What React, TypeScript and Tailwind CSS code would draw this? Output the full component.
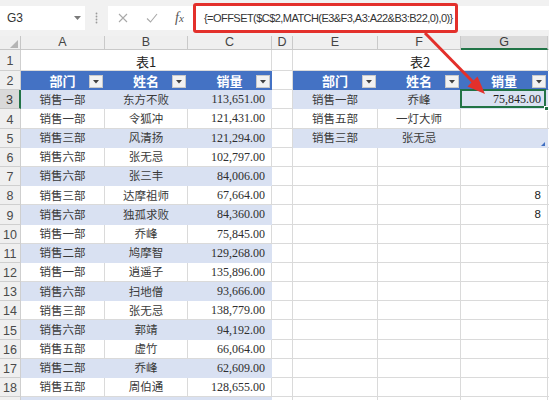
import React from 'react';

const t1: [string, string, string][] = [
  ['销售一部', '东方不败', '113,651.00'],
  ['销售一部', '令狐冲', '121,431.00'],
  ['销售三部', '风清扬', '121,294.00'],
  ['销售六部', '张无忌', '102,797.00'],
  ['销售六部', '张三丰', '84,006.00'],
  ['销售三部', '达摩祖师', '67,664.00'],
  ['销售六部', '独孤求败', '84,360.00'],
  ['销售一部', '乔峰', '75,845.00'],
  ['销售二部', '鸠摩智', '129,268.00'],
  ['销售一部', '逍遥子', '135,896.00'],
  ['销售六部', '扫地僧', '93,666.00'],
  ['销售三部', '张无忌', '138,779.00'],
  ['销售六部', '郭靖', '94,192.00'],
  ['销售五部', '虚竹', '66,064.00'],
  ['销售二部', '乔峰', '62,609.00'],
  ['销售五部', '周伯通', '128,655.00'],
  ['', '', ''],
];

const t2: [string, string][] = [
  ['销售一部', '乔峰'],
  ['销售五部', '一灯大师'],
  ['销售三部', '张无忌'],
];

const WHITE = 'border-r border-b border-[#dadada] bg-white';
const BAND = 'border-r border-b border-[#d9e1f2] bg-[#d9e1f2]';
const HEAD = 'border-r border-b border-[#4472c4] bg-[#4472c4]';

function Drop() {
  return (
    <div className="absolute right-[1px] bottom-[1px] w-[14px] h-[13px] bg-[#f2f2f2] border border-[#c9c9c9] flex items-center justify-center">
      <svg width="6" height="4" viewBox="0 0 6 4">
        <polygon points="0,0 6,0 3,3.5" fill="#404040" />
      </svg>
    </div>
  );
}

function HeadCell({ text }: { text: string }) {
  return (
    <div className={`${HEAD} relative flex items-center justify-center pt-[2px] text-white font-bold text-[13px] font-['Noto_Sans_CJK_SC',sans-serif]`}>
      {text}
      <Drop />
    </div>
  );
}

function TextCell({ text, band, align }: { text: string; band: boolean; align: 'c' | 'r' }) {
  if (align === 'c') {
    return (
      <div className={`${band ? BAND : WHITE} flex items-center justify-center text-[11.5px] text-[#3a3a3a] font-['Noto_Sans_CJK_SC',sans-serif]`}>
        {text}
      </div>
    );
  }
  return (
    <div className={`${band ? BAND : WHITE} flex items-center justify-end pr-[6px] text-[12px] text-[#2e2e2e] font-['Liberation_Serif',serif]`}>
      {text}
    </div>
  );
}

function RowHead({ n }: { n: number }) {
  if (n === 3) {
    return (
      <div className="flex justify-center items-center pt-[3px] border-b border-b-[#c6c6c6] border-r-2 border-r-[#217346] bg-[#d9d9d9] text-[#3c3c3c] text-[12.5px] font-['Liberation_Sans',sans-serif]">
        {n}
      </div>
    );
  }
  return (
    <div className="flex justify-center items-center pt-[3px] border-r border-b border-[#cfcfcf] bg-[#efefef] text-[#4a4a4a] text-[12.5px] font-['Liberation_Sans',sans-serif]">
      {n <= 18 ? n : ''}
    </div>
  );
}

export default function App() {
  const cells: React.ReactNode[] = [];

  // column header row
  cells.push(
    <div key="corner" className="relative border-r border-b border-[#c6c6c6] bg-[#efefef]">
      <svg className="absolute right-[2px] bottom-[1px]" width="8" height="8" viewBox="0 0 8 8">
        <polygon points="8,0 8,8 0,8" fill="#b4b4b4" />
      </svg>
    </div>
  );
  ['A', 'B', 'C', 'D', 'E', 'F'].forEach((c) =>
    cells.push(
      <div key={'h' + c} className="flex items-center justify-center border-r border-b border-[#c9c9c9] bg-[#efefef] text-[#444] text-[12.5px] font-['Liberation_Sans',sans-serif]">
        {c}
      </div>
    )
  );
  cells.push(
    <div key="hG" className="flex items-center justify-center border-r border-r-[#c9c9c9] border-b-2 border-b-[#217346] bg-[#dadada] text-[#3c3c3c] text-[12.5px] font-['Liberation_Sans',sans-serif]">
      G
    </div>
  );
  cells.push(<div key="hX" className="border-b border-[#c9c9c9] bg-[#efefef]" />);

  for (let r = 1; r <= 19; r++) {
    cells.push(<RowHead key={'r' + r} n={r} />);
    // A-C
    if (r === 1) {
      cells.push(
        <div key="t1" className={`${WHITE} col-span-3 flex items-center justify-center pt-[3px] text-[13px] text-[#222] font-['Noto_Sans_CJK_SC',sans-serif]`}>
          表1
        </div>
      );
    } else if (r === 2) {
      cells.push(<HeadCell key="a2" text="部门" />);
      cells.push(<HeadCell key="b2" text="姓名" />);
      cells.push(<HeadCell key="c2" text="销量" />);
    } else {
      const d = t1[r - 3];
      const band = r % 2 === 1;
      cells.push(<TextCell key={'a' + r} text={d[0]} band={band} align="c" />);
      cells.push(<TextCell key={'b' + r} text={d[1]} band={band} align="c" />);
      cells.push(<TextCell key={'c' + r} text={d[2]} band={band} align="r" />);
    }
    // D
    cells.push(<div key={'d' + r} className={WHITE} />);
    // E-G
    if (r === 1) {
      cells.push(
        <div key="t2" className={`${WHITE} col-span-3 flex items-center justify-center pt-[3px] text-[13px] text-[#222] font-['Noto_Sans_CJK_SC',sans-serif]`}>
          表2
        </div>
      );
    } else if (r === 2) {
      cells.push(<HeadCell key="e2" text="部门" />);
      cells.push(<HeadCell key="f2" text="姓名" />);
      cells.push(<HeadCell key="g2" text="销量" />);
    } else if (r <= 5) {
      const d = t2[r - 3];
      const band = r % 2 === 1;
      cells.push(<TextCell key={'e' + r} text={d[0]} band={band} align="c" />);
      cells.push(<TextCell key={'f' + r} text={d[1]} band={band} align="c" />);
      if (r === 3) {
        cells.push(
          <div key="g3" className={`${BAND} relative flex items-center justify-end pr-[6px] text-[12px] text-[#1e1e1e] font-['Liberation_Serif',serif]`}>
            75,845.00
            <div className="absolute -left-[1px] -top-[1px] right-[1px] bottom-0 border-2 border-[#217346]" />
            <div className="absolute right-[-2px] bottom-[-3px] w-[5px] h-[5px] bg-[#217346] border border-white" />
          </div>
        );
      } else if (r === 5) {
        cells.push(
          <div key="g5" className={`${BAND} relative`}>
            <svg className="absolute right-[2px] bottom-[1px]" width="4" height="4" viewBox="0 0 4 4">
              <polygon points="4,0 4,4 0,4" fill="#3f6fc2" />
            </svg>
          </div>
        );
      } else {
        cells.push(<div key={'g' + r} className={WHITE} />);
      }
    } else {
      cells.push(<div key={'e' + r} className={WHITE} />);
      cells.push(<div key={'f' + r} className={WHITE} />);
      cells.push(
        <div key={'g' + r} className={`${WHITE} flex items-center justify-end pr-[6px] text-[11.5px] text-[#222] font-['Liberation_Sans',sans-serif]`}>
          {r === 8 || r === 9 ? '8' : ''}
        </div>
      );
    }
    cells.push(<div key={'x' + r} className="border-b border-[#dadada] bg-white" />);
  }

  return (
    <div className="relative w-[549px] h-[400px] overflow-hidden bg-white">
      {/* formula bar */}
      <div className="h-[36px] bg-[#f1f1f1] flex items-center">
        <div className="w-[85px] h-[24px] bg-white flex items-center justify-between pl-[7px] pr-[4px] text-[12px] text-[#333] font-['Liberation_Sans',sans-serif]">
          <span>G3</span>
          <svg width="7" height="4" viewBox="0 0 7 4">
            <polygon points="0,0 7,0 3.5,4" fill="#7a7a7a" />
          </svg>
        </div>
        <div className="w-[23px] flex justify-center">
          <svg width="3" height="12" viewBox="0 0 3 12">
            <circle cx="1.5" cy="1.5" r="0.9" fill="#9a9a9a" />
            <circle cx="1.5" cy="4.5" r="0.9" fill="#9a9a9a" />
            <circle cx="1.5" cy="7.5" r="0.9" fill="#9a9a9a" />
            <circle cx="1.5" cy="10.5" r="0.9" fill="#9a9a9a" />
          </svg>
        </div>
        <div className="w-[85px] h-[24px] bg-white flex items-center">
          <svg className="ml-[10px]" width="10" height="10" viewBox="0 0 10 10">
            <path d="M1 1 L9 9 M9 1 L1 9" stroke="#a9a9a9" strokeWidth="1.1" fill="none" />
          </svg>
          <svg className="ml-[18px]" width="12" height="10" viewBox="0 0 12 10">
            <path d="M1 5.5 L4.5 9 L11 1" stroke="#a9a9a9" strokeWidth="1.1" fill="none" />
          </svg>
          <span className="ml-[17px] italic text-[14px] leading-none text-[#555] font-['Liberation_Serif',serif]">
            f<span className="text-[11px]">x</span>
          </span>
        </div>
        <div className="flex-1 h-[24px] ml-[3px] bg-white flex items-center pl-[8px] text-[11px] tracking-[-0.55px] text-[#333] font-['Liberation_Sans',sans-serif] whitespace-nowrap">
          {'{=OFFSET($C$2,MATCH(E3&F3,A3:A22&B3:B22,0),0)}'}
        </div>
      </div>

      {/* sheet */}
      <div className="grid grid-cols-[21px_84px_83px_84px_21px_85px_83px_87px_1fr] grid-rows-[14px_21px_repeat(18,19.2px)]">
        {cells}
      </div>

      {/* annotations */}
      <div className="absolute left-[193px] top-[3px] w-[265px] h-[30px] border-[3px] border-[#e3302b] rounded-[3px]" />
      <svg className="absolute left-0 top-0 pointer-events-none" width="549" height="400" viewBox="0 0 549 400">
        <line x1="425" y1="33" x2="474" y2="83" stroke="#e3302b" strokeWidth="3" />
        <polygon points="485,94 467.5,86.5 477.5,76.5" fill="#e3302b" />
      </svg>
    </div>
  );
}
